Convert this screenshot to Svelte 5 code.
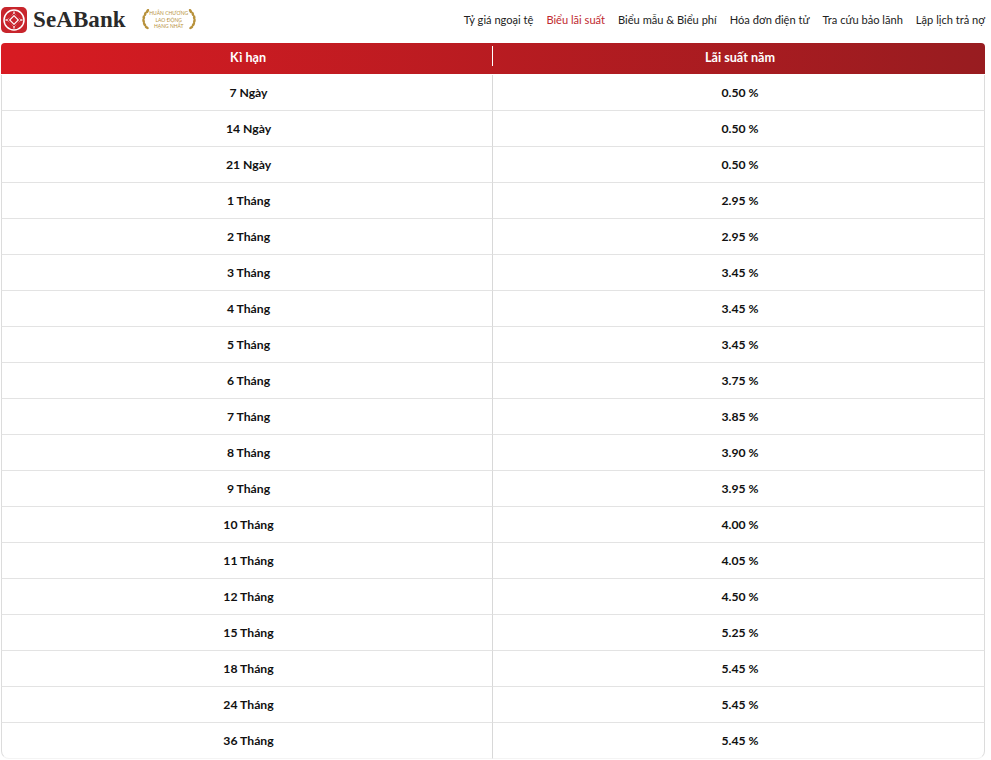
<script>
    const navItems = [
        { label: "Tỷ giá ngoại tệ" },
        { label: "Biểu lãi suất", active: true },
        { label: "Biểu mẫu & Biểu phí" },
        { label: "Hóa đơn điện tử" },
        { label: "Tra cứu bảo lãnh" },
        { label: "Lập lịch trả nợ" }
    ];

    const rates = [
        ["7 Ngày", "0.50 %"],
        ["14 Ngày", "0.50 %"],
        ["21 Ngày", "0.50 %"],
        ["1 Tháng", "2.95 %"],
        ["2 Tháng", "2.95 %"],
        ["3 Tháng", "3.45 %"],
        ["4 Tháng", "3.45 %"],
        ["5 Tháng", "3.45 %"],
        ["6 Tháng", "3.75 %"],
        ["7 Tháng", "3.85 %"],
        ["8 Tháng", "3.90 %"],
        ["9 Tháng", "3.95 %"],
        ["10 Tháng", "4.00 %"],
        ["11 Tháng", "4.05 %"],
        ["12 Tháng", "4.50 %"],
        ["15 Tháng", "5.25 %"],
        ["18 Tháng", "5.45 %"],
        ["24 Tháng", "5.45 %"],
        ["36 Tháng", "5.45 %"]
    ];

    // leaves along the award wreath: [x, y, rotation]
    const leaves = [
        [6.5, 2, 30], [4.2, 5, 15], [2.8, 8.5, 0], [2.6, 12, -15], [3.6, 15.5, -35], [5.8, 18.5, -55]
    ];
</script>

<div class="page">
    <header class="topbar">
        <div class="brand">
            <svg class="logo-mark" viewBox="0 0 26 26" aria-hidden="true">
                <rect width="26" height="26" rx="5" fill="#c8252c" />
                <circle cx="13" cy="13" r="10" fill="none" stroke="#fff" stroke-width="1.5" />
                <path d="M13 3.5Q14.5 11.5 22.5 13 14.5 14.5 13 22.5 11.5 14.5 3.5 13 11.5 11.5 13 3.5Z" fill="#fff" />
                <path d="M13 7 19 13 13 19 7 13Z" fill="#fff" stroke="#c8252c" stroke-width="1.2" />
                <path d="M13 9.6 16.4 13 13 16.4 9.6 13Z" fill="#c8252c" />
            </svg>
            <span class="wordmark">SeABank</span>
            <div class="award">
                <svg class="laurel" viewBox="0 0 11 22" aria-hidden="true">
                    {#each leaves as leaf}
                        <ellipse cx={leaf[0]} cy={leaf[1]} rx="1.3" ry="2.3" fill="#b8923c" transform="rotate({leaf[2]} {leaf[0]} {leaf[1]})" />
                    {/each}
                </svg>
                <div class="award-text">
                    <span>HUÂN CHƯƠNG</span>
                    <span>LAO ĐỘNG</span>
                    <span>HẠNG NHẤT</span>
                </div>
                <svg class="laurel flip" viewBox="0 0 11 22" aria-hidden="true">
                    {#each leaves as leaf}
                        <ellipse cx={leaf[0]} cy={leaf[1]} rx="1.3" ry="2.3" fill="#b8923c" transform="rotate({leaf[2]} {leaf[0]} {leaf[1]})" />
                    {/each}
                </svg>
            </div>
        </div>
        <nav class="nav">
            {#each navItems as item}
                <a href="#top" class:active={item.active}>{item.label}</a>
            {/each}
        </nav>
    </header>

    <table class="rates">
        <thead>
            <tr>
                <th>Kì hạn</th>
                <th>Lãi suất năm</th>
            </tr>
        </thead>
        <tbody>
            {#each rates as row}
                <tr>
                    <td>{row[0]}</td>
                    <td>{row[1]}</td>
                </tr>
            {/each}
        </tbody>
    </table>
</div>

<style>
    :global(body) {
        background: #fff;
        font-family: Lato, "Noto Sans", sans-serif;
        color: #111;
    }
    .page {
        width: 991px;
        height: 760px;
        overflow: hidden;
    }
    .topbar {
        display: flex;
        align-items: center;
        justify-content: space-between;
        height: 43px;
        padding: 0 6px 3px 1px;
        box-sizing: border-box;
    }
    .brand {
        display: flex;
        align-items: center;
    }
    .logo-mark {
        width: 26px;
        height: 26px;
        margin-right: 6px;
    }
    .wordmark {
        font-family: "Liberation Serif", serif;
        font-size: 23px;
        font-weight: 700;
        color: #2a2a2a;
        letter-spacing: 0.1px;
    }
    .award {
        display: flex;
        align-items: center;
        margin-left: 15px;
        color: #b8923c;
    }
    .laurel {
        width: 11px;
        height: 22px;
    }
    .laurel.flip {
        transform: scaleX(-1);
    }
    .award-text {
        display: flex;
        flex-direction: column;
        align-items: center;
        font-size: 5px;
        line-height: 6.5px;
        width: 34px;
    }
    .award-text span {
        white-space: nowrap;
    }
    .nav {
        display: flex;
        gap: 13px;
        font-size: 11.1px;
        margin-bottom: 1px;
    }
    .nav a {
        color: #222;
        text-decoration: none;
        white-space: nowrap;
    }
    .nav a.active {
        color: #c0282e;
    }
    .rates {
        width: 984px;
        margin-left: 1px;
        border-collapse: separate;
        border-spacing: 0;
        table-layout: fixed;
    }
    .rates thead tr {
        background: linear-gradient(90deg, #d81b22, #981c20);
    }
    .rates th {
        height: 32px;
        padding: 0 0 2px 2px;
        box-sizing: border-box;
        border-bottom: 1px solid #fff;
        color: #fff;
        font-size: 12.6px;
        font-weight: 700;
        position: relative;
    }
    .rates th:first-child {
        border-top-left-radius: 4px;
    }
    .rates th:first-child::after {
        content: "";
        position: absolute;
        right: 0;
        top: 3px;
        bottom: 8px;
        width: 1px;
        background: #fff;
    }
    .rates th:last-child {
        border-top-right-radius: 4px;
    }
    .rates td {
        height: 36px;
        box-sizing: border-box;
        padding: 0 0 0 3px;
        text-align: center;
        font-size: 12.2px;
        font-weight: 700;
        color: #111;
        border-bottom: 1px solid #e3e3e3;
    }
    .rates td:first-child {
        border-left: 1px solid #dcdcdc;
        border-right: 1px solid #d8d8d8;
    }
    .rates td:last-child {
        border-right: 1px solid #dcdcdc;
    }
    .rates tbody tr:last-child td {
        border-bottom-color: #f4f4f4;
    }
    .rates tbody tr:last-child td:first-child {
        border-bottom-left-radius: 8px;
    }
    .rates tbody tr:last-child td:last-child {
        border-bottom-right-radius: 8px;
    }
</style>
